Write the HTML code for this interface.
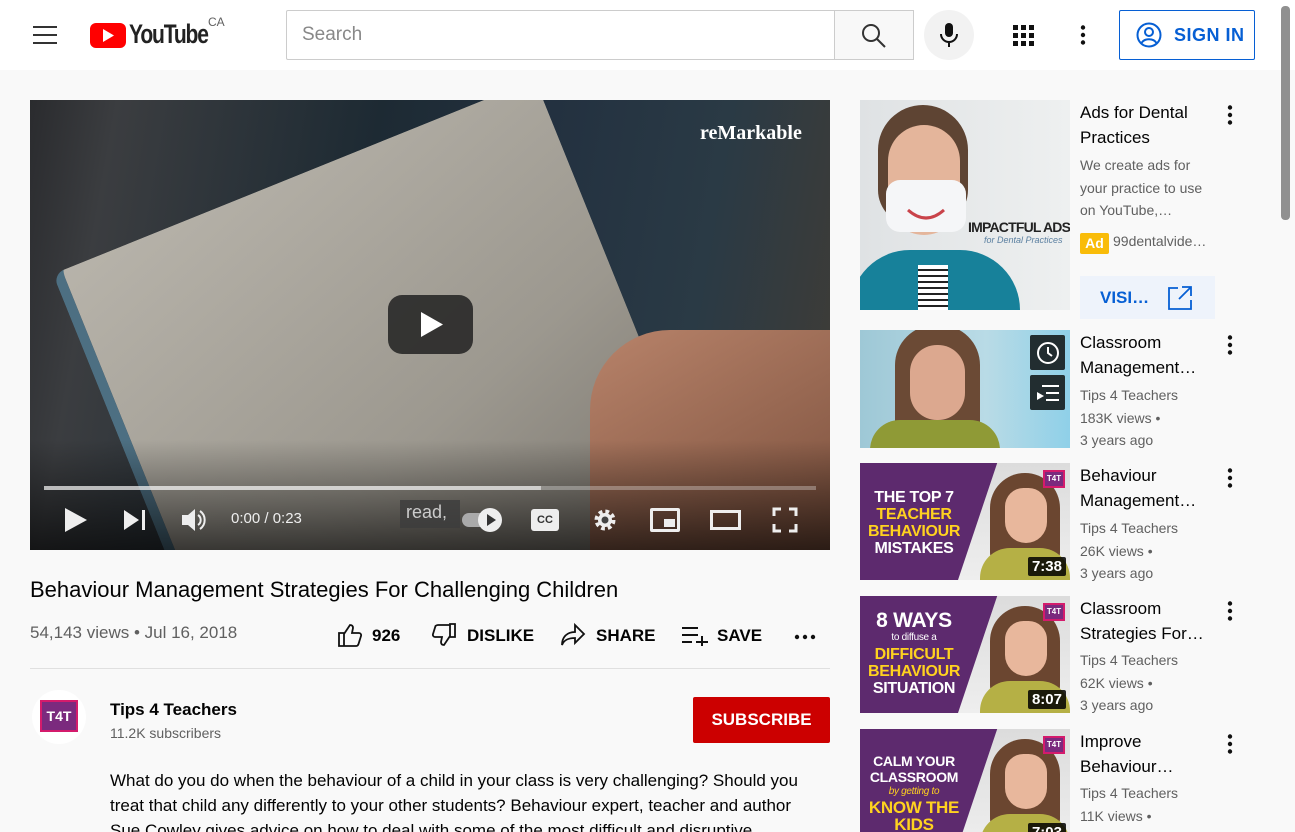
<!DOCTYPE html>
<html><head><meta charset="utf-8"><style>
*{box-sizing:border-box;margin:0;padding:0}
html,body{width:1295px;height:832px;overflow:hidden}
body{background:#f9f9f9;font-family:"Liberation Sans",Arial,sans-serif;position:relative}
.a{position:absolute}
.t{color:#030303}
.g{color:#606060}
.st{position:absolute;left:1080px;font-size:17px;line-height:25px;color:#030303;width:130px}
.sm{position:absolute;left:1080px;font-size:14px;line-height:22.5px;color:#606060;width:140px}
.dots{position:absolute;left:1227px}
.dur{position:absolute;right:4px;bottom:4px;background:rgba(0,0,0,.85);color:#fff;font-size:15px;font-weight:bold;padding:1px 4px;border-radius:2px}
.pth{position:absolute;left:860px;width:210px;height:117px;background:#5d2a6e;overflow:hidden}
.pt{position:absolute;left:8px;width:92px;text-align:center;font-weight:bold;color:#fff;font-size:16px;line-height:17px;white-space:nowrap;letter-spacing:-.3px}
.y{color:#ffd21f}
.fa{position:absolute;left:98px;top:0;width:112px;height:117px;background:linear-gradient(#dcdcdc,#eee);clip-path:polygon(35% 0,100% 0,100% 100%,0 100%)}
.hair{position:absolute;left:130px;top:10px;width:70px;height:90px;border-radius:35px 35px 10px 10px;background:#6b4630}
.face{position:absolute;left:145px;top:25px;width:42px;height:55px;border-radius:21px 21px 24px 24px;background:#e8b79c}
.jk{position:absolute;left:120px;top:85px;width:90px;height:40px;border-radius:30px 30px 0 0;background:#b5b045}
.logo{position:absolute;left:183px;top:7px;width:22px;height:18px;background:#7b2a7e;border:2px solid #d41b6c;color:#fff;font-size:8px;font-weight:bold;text-align:center;line-height:14px}
</style></head><body>
<div class="a" style="left:0;top:0;width:1295px;height:70px;background:#fff"></div>
<div class="a" style="left:33px;top:26px;width:24px;height:2px;background:#333"></div>
<div class="a" style="left:33px;top:34px;width:24px;height:2px;background:#333"></div>
<div class="a" style="left:33px;top:42px;width:24px;height:2px;background:#333"></div>
<div class="a" style="left:90px;top:23px;width:36px;height:25px;background:#f00;border-radius:6px"></div>
<svg class="a" style="left:103px;top:29px" width="12" height="13"><path d="M0 0L11 6.5L0 13z" fill="#fff"/></svg>
<div class="a" style="left:129px;top:19px;font-size:27px;letter-spacing:-1.5px;font-weight:bold;color:#222;transform:scaleX(.78);transform-origin:left">YouTube</div>
<div class="a" style="left:208px;top:15px;font-size:12px;color:#606060">CA</div>
<div class="a" style="left:286px;top:10px;width:549px;height:50px;border:1px solid #ccc;border-radius:2px 0 0 2px;background:#fff"></div>
<div class="a" style="left:302px;top:24px;font-size:19px;color:#888">Search</div>
<div class="a" style="left:834px;top:10px;width:80px;height:50px;border:1px solid #ccc;background:#f8f8f8"></div>
<svg class="a" style="left:861px;top:23px" width="26" height="26"><circle cx="10" cy="10" r="8" fill="none" stroke="#333" stroke-width="2"/><path d="M16 16L24 24" stroke="#333" stroke-width="2"/></svg>
<div class="a" style="left:924px;top:10px;width:50px;height:50px;border-radius:50%;background:#f2f2f2"></div>
<svg class="a" style="left:937px;top:22px" width="24" height="26"><rect x="8" y="1" width="8" height="14" rx="4" fill="#111"/><path d="M4 12a8 8 0 0 0 16 0M12 20v5" stroke="#111" stroke-width="2" fill="none"/></svg>
<svg class="a" style="left:1013px;top:25px" width="21" height="21" fill="#111"><rect x="0" y="0" width="5" height="5"/><rect x="8" y="0" width="5" height="5"/><rect x="16" y="0" width="5" height="5"/><rect x="0" y="8" width="5" height="5"/><rect x="8" y="8" width="5" height="5"/><rect x="16" y="8" width="5" height="5"/><rect x="0" y="16" width="5" height="5"/><rect x="8" y="16" width="5" height="5"/><rect x="16" y="16" width="5" height="5"/></svg>
<svg class="a" style="left:1080px;top:25px" width="6" height="20" fill="#111"><circle cx="3" cy="2.5" r="2.2"/><circle cx="3" cy="10" r="2.2"/><circle cx="3" cy="17.5" r="2.2"/></svg>
<div class="a" style="left:1119px;top:10px;width:136px;height:50px;border:1px solid #065fd4;border-radius:2px"></div>
<svg class="a" style="left:1136px;top:22px" width="26" height="26"><circle cx="13" cy="13" r="11.5" fill="none" stroke="#065fd4" stroke-width="2"/><circle cx="13" cy="10" r="4" fill="none" stroke="#065fd4" stroke-width="2"/><path d="M5.5 21c3-5 12-5 15 0" fill="none" stroke="#065fd4" stroke-width="2"/></svg>
<div class="a" style="left:1174px;top:25px;font-size:18px;font-weight:bold;color:#065fd4;letter-spacing:.5px">SIGN IN</div>
<div class="a" style="left:1281px;top:6px;width:9px;height:214px;background:#909090;border-radius:4px"></div>

<!-- video -->
<div class="a" style="left:30px;top:100px;width:800px;height:450px;overflow:hidden;background:linear-gradient(100deg,#2a2b2e 0%,#3b3d40 10%,#1d2a33 40%,#233140 60%,#2a3a45 80%,#413c35 100%)">
 <div class="a" style="left:90px;top:60px;width:520px;height:460px;background:linear-gradient(160deg,#b7b3aa,#9c988f 60%,#7c776f);transform:rotate(-22deg);border-radius:12px;border-left:10px solid #4d6f82"></div>
 <div class="a" style="left:560px;top:230px;width:240px;height:220px;background:linear-gradient(150deg,#b8836a,#7a4f3c);border-radius:80px 0 0 0"></div>
 <div class="a" style="left:0;top:340px;width:800px;height:110px;background:linear-gradient(rgba(0,0,0,0),rgba(0,0,0,.65))"></div>
 <div class="a" style="left:670px;top:22px;font-family:'Liberation Serif',serif;font-weight:bold;font-size:20px;color:#fff">reMarkable</div>
 <div class="a" style="left:358px;top:195px;width:85px;height:59px;background:rgba(33,33,33,.85);border-radius:14px"></div>
 <svg class="a" style="left:391px;top:212px" width="22" height="25"><path d="M0 0L22 12.5L0 25z" fill="#fff"/></svg>
 <div class="a" style="left:14px;top:386px;width:772px;height:4px;background:rgba(255,255,255,.3)"></div>
 <div class="a" style="left:14px;top:386px;width:497px;height:4px;background:rgba(255,255,255,.55)"></div>
 <svg class="a" style="left:35px;top:408px" width="22" height="24"><path d="M0 0L22 12L0 24z" fill="#eee"/></svg>
 <svg class="a" style="left:94px;top:410px" width="24" height="20"><path d="M0 0L15 10L0 20z" fill="#eee"/><rect x="18" y="0" width="3" height="20" fill="#eee"/></svg>
 <svg class="a" style="left:151px;top:407px" width="26" height="26"><path d="M1 8h6l7-6v22l-7-6H1z" fill="#eee"/><path d="M17 8a6 6 0 0 1 0 10M19 4a11 11 0 0 1 0 18" stroke="#eee" stroke-width="2" fill="none"/></svg>
 <div class="a" style="left:201px;top:410px;font-size:15px;color:#eee">0:00 / 0:23</div>
 <div class="a" style="left:370px;top:400px;width:60px;height:28px;background:rgba(60,60,60,.8);color:#ccc;font-size:18px;padding:2px 6px">read,</div>
 <div class="a" style="left:432px;top:413px;width:30px;height:14px;border-radius:7px;background:#aaa"></div>
 <div class="a" style="left:448px;top:408px;width:24px;height:24px;border-radius:50%;background:#eee"></div>
 <svg class="a" style="left:457px;top:414px" width="9" height="12"><path d="M0 0L9 6L0 12z" fill="#333"/></svg>
 <div class="a" style="left:501px;top:409px;width:28px;height:22px;border-radius:3px;background:#eee;font-size:11px;font-weight:bold;color:#333;text-align:center;line-height:22px">CC</div>
 <svg class="a" style="left:562px;top:407px" width="26" height="26"><circle cx="13" cy="13" r="8" fill="none" stroke="#eee" stroke-width="5" stroke-dasharray="3.5 2.8"/><circle cx="13" cy="13" r="7" fill="#eee"/><circle cx="13" cy="13" r="3.5" fill="#444"/></svg>
 <div class="a" style="left:620px;top:408px;width:30px;height:24px;border:3px solid #eee;border-radius:2px"></div>
 <div class="a" style="left:634px;top:419px;width:11px;height:8px;background:#eee"></div>
 <div class="a" style="left:680px;top:410px;width:31px;height:20px;border:3px solid #eee"></div>
 <svg class="a" style="left:742px;top:407px" width="26" height="26" fill="none" stroke="#eee" stroke-width="3"><path d="M2 9V2h7M17 2h7v7M24 17v7h-7M9 24H2v-7"/></svg>
</div>

<div class="a t" style="left:30px;top:577px;font-size:22px">Behaviour Management Strategies For Challenging Children</div>
<div class="a g" style="left:30px;top:623px;font-size:17px">54,143 views • Jul 16, 2018</div>
<svg class="a" style="left:337px;top:622px" width="26" height="26" fill="none" stroke="#111" stroke-width="1.8"><path d="M2 11h5v13H2zM7 12l6-9c2 0 3 1 3 3l-1 5h7c1.5 0 2.5 1.5 2 3l-2.5 8c-.4 1.2-1.3 2-2.5 2H7"/></svg>
<div class="a t" style="left:372px;top:626px;font-size:17px;font-weight:bold">926</div>
<svg class="a" style="left:431px;top:622px" width="26" height="26" fill="none" stroke="#111" stroke-width="1.8"><path d="M24 15h-5V2h5zM19 14l-6 9c-2 0-3-1-3-3l1-5H4c-1.5 0-2.5-1.5-2-3l2.5-8C4.9 3.8 5.8 3 7 3h12"/></svg>
<div class="a t" style="left:467px;top:626px;font-size:17px;font-weight:bold">DISLIKE</div>
<svg class="a" style="left:560px;top:622px" width="26" height="26" fill="none" stroke="#111" stroke-width="1.8"><path d="M15 3l9 9-9 9v-5C8 16 4 18 2 23c0-8 5-13 13-13z"/></svg>
<div class="a t" style="left:596px;top:626px;font-size:17px;font-weight:bold">SHARE</div>
<svg class="a" style="left:682px;top:624px" width="28" height="22" stroke="#111" stroke-width="2"><path d="M0 4h16M0 11h16M0 18h10M14 18h12M20 12v12"/></svg>
<div class="a t" style="left:717px;top:626px;font-size:17px;font-weight:bold">SAVE</div>
<svg class="a" style="left:794px;top:634px" width="22" height="6" fill="#111"><circle cx="3" cy="3" r="2.2"/><circle cx="11" cy="3" r="2.2"/><circle cx="19" cy="3" r="2.2"/></svg>
<div class="a" style="left:30px;top:668px;width:800px;height:1px;background:#e0e0e0"></div>
<div class="a" style="left:32px;top:690px;width:54px;height:54px;border-radius:50%;background:#fff"></div>
<div class="a" style="left:40px;top:700px;width:38px;height:32px;background:#7b2a7e;color:#fff;font-size:14px;font-weight:bold;text-align:center;line-height:28px;border:2px solid #d41b6c">T4T</div>
<div class="a t" style="left:110px;top:700px;font-size:17px;font-weight:bold">Tips 4 Teachers</div>
<div class="a g" style="left:110px;top:725px;font-size:14px">11.2K subscribers</div>
<div class="a" style="left:693px;top:697px;width:137px;height:46px;background:#cc0000;border-radius:2px;color:#fff;font-size:17px;font-weight:bold;text-align:center;line-height:46px">SUBSCRIBE</div>
<div class="a t" style="left:110px;top:768px;width:705px;font-size:17px;line-height:25px">What do you do when the behaviour of a child in your class is very challenging? Should you treat that child any differently to your other students? Behaviour expert, teacher and author Sue Cowley gives advice on how to deal with some of the most difficult and disruptive</div>

<!-- sidebar: ad -->
<div class="a" style="left:860px;top:100px;width:210px;height:210px;background:linear-gradient(90deg,#dfe2e4,#eef0f0);overflow:hidden">
 <div class="a" style="left:18px;top:5px;width:90px;height:120px;border-radius:45px 45px 35px 35px;background:#5e4433"></div>
 <div class="a" style="left:28px;top:25px;width:72px;height:110px;border-radius:36px;background:#e4b59b"></div>
 <div class="a" style="left:26px;top:80px;width:80px;height:52px;border-radius:14px;background:#f5f6f8"></div>
 <svg class="a" style="left:46px;top:108px" width="40" height="14"><path d="M2 2q18 16 36 0" stroke="#c9434a" stroke-width="3" fill="none"/></svg>
 <div class="a" style="left:-10px;top:150px;width:170px;height:80px;border-radius:60px 60px 0 0;background:#17819a"></div>
 <div class="a" style="left:58px;top:165px;width:30px;height:50px;background:repeating-linear-gradient(#fff 0 4px,#222 4px 6px)"></div>
 <div class="a" style="left:108px;top:119px;font-weight:bold;font-size:14px;color:#222;letter-spacing:-.8px;white-space:nowrap">IMPACTFUL ADS</div>
 <div class="a" style="left:124px;top:135px;font-style:italic;font-size:9px;color:#5a7fa0;white-space:nowrap">for Dental Practices</div>
</div>
<div class="st" style="top:100px">Ads for Dental Practices</div>
<div class="sm" style="top:154px">We create ads for your practice to use on YouTube,…</div>
<div class="a" style="left:1080px;top:233px;width:29px;height:21px;background:#f9bc09;border-radius:2px;color:#fff;font-size:14px;font-weight:bold;text-align:center;line-height:21px">Ad</div>
<div class="a g" style="left:1113px;top:233px;font-size:14px">99dentalvide…</div>
<div class="a" style="left:1080px;top:276px;width:135px;height:43px;background:#eef3fb"></div>
<div class="a" style="left:1100px;top:288px;font-size:17px;font-weight:bold;color:#065fd4">VISI…</div>
<svg class="a" style="left:1168px;top:286px" width="25" height="24" fill="none" stroke="#065fd4" stroke-width="1.8"><path d="M10 2H1v21h22v-9M14 1h9v9M23 1L11 13"/></svg>
<svg class="dots" style="top:105px" width="6" height="20" fill="#111"><circle cx="3" cy="2.5" r="2.2"/><circle cx="3" cy="10" r="2.2"/><circle cx="3" cy="17.5" r="2.2"/></svg>

<!-- item 2 -->
<div class="a" style="left:860px;top:330px;width:210px;height:118px;background:linear-gradient(90deg,#9ec8d6,#b9dbe6 60%,#8fd0e8);overflow:hidden">
 <div class="a" style="left:35px;top:-5px;width:85px;height:110px;border-radius:40px 40px 10px 10px;background:#6b4a35"></div>
 <div class="a" style="left:50px;top:15px;width:55px;height:75px;border-radius:27px;background:#dca88f"></div>
 <div class="a" style="left:10px;top:90px;width:130px;height:40px;border-radius:30px 30px 0 0;background:#8f9a36"></div>
 <div class="a" style="left:170px;top:5px;width:35px;height:35px;background:#222d30;border-radius:2px"></div>
 <svg class="a" style="left:176px;top:11px" width="24" height="24" fill="none" stroke="#fff" stroke-width="2"><circle cx="12" cy="12" r="10"/><path d="M12 6v6l4 3"/></svg>
 <div class="a" style="left:170px;top:45px;width:35px;height:35px;background:#222d30;border-radius:2px"></div>
 <svg class="a" style="left:176px;top:53px" width="24" height="20" fill="#fff"><path d="M1 9l7 4-7 4z"/><rect x="6" y="2" width="17" height="2"/><rect x="10" y="9" width="13" height="2"/><rect x="10" y="16" width="13" height="2"/></svg>
</div>
<div class="st" style="top:330px">Classroom Management…</div>
<div class="sm" style="top:384px">Tips 4 Teachers<br>183K views •<br>3 years ago</div>
<svg class="dots" style="top:335px" width="6" height="20" fill="#111"><circle cx="3" cy="2.5" r="2.2"/><circle cx="3" cy="10" r="2.2"/><circle cx="3" cy="17.5" r="2.2"/></svg>

<!-- item 3 -->
<div class="pth" style="top:463px"><div class="fa"></div><div class="hair"></div><div class="face"></div><div class="jk"></div><div class="logo">T4T</div>
 <div class="pt" style="top:26px">THE TOP 7<br><span class="y">TEACHER<br>BEHAVIOUR</span><br>MISTAKES</div><div class="dur">7:38</div></div>
<div class="st" style="top:463px">Behaviour Management…</div>
<div class="sm" style="top:517px">Tips 4 Teachers<br>26K views •<br>3 years ago</div>
<svg class="dots" style="top:468px" width="6" height="20" fill="#111"><circle cx="3" cy="2.5" r="2.2"/><circle cx="3" cy="10" r="2.2"/><circle cx="3" cy="17.5" r="2.2"/></svg>

<!-- item 4 -->
<div class="pth" style="top:596px"><div class="fa"></div><div class="hair"></div><div class="face"></div><div class="jk"></div><div class="logo">T4T</div>
 <div class="pt" style="top:14px;font-size:21px;line-height:22px">8 WAYS</div><div class="pt" style="top:37px;font-size:10px;line-height:10px;font-weight:normal">to diffuse a</div>
 <div class="pt" style="top:50px"><span class="y">DIFFICULT<br>BEHAVIOUR</span><br>SITUATION</div><div class="dur">8:07</div></div>
<div class="st" style="top:596px">Classroom Strategies For…</div>
<div class="sm" style="top:649px">Tips 4 Teachers<br>62K views •<br>3 years ago</div>
<svg class="dots" style="top:601px" width="6" height="20" fill="#111"><circle cx="3" cy="2.5" r="2.2"/><circle cx="3" cy="10" r="2.2"/><circle cx="3" cy="17.5" r="2.2"/></svg>

<!-- item 5 -->
<div class="pth" style="top:729px"><div class="fa"></div><div class="hair"></div><div class="face"></div><div class="jk"></div><div class="logo">T4T</div>
 <div class="pt" style="top:24px;font-size:14px;line-height:16px">CALM YOUR<br>CLASSROOM</div><div class="pt" style="top:58px;font-size:10px;line-height:10px;font-weight:normal;font-style:italic"><span class="y">by getting to</span></div>
 <div class="pt" style="top:70px;font-size:17px"><span class="y">KNOW THE<br>KIDS</span></div><div class="dur">7:03</div></div>
<div class="st" style="top:729px">Improve Behaviour…</div>
<div class="sm" style="top:782px">Tips 4 Teachers<br>11K views •</div>
<svg class="dots" style="top:734px" width="6" height="20" fill="#111"><circle cx="3" cy="2.5" r="2.2"/><circle cx="3" cy="10" r="2.2"/><circle cx="3" cy="17.5" r="2.2"/></svg>
</body></html>
